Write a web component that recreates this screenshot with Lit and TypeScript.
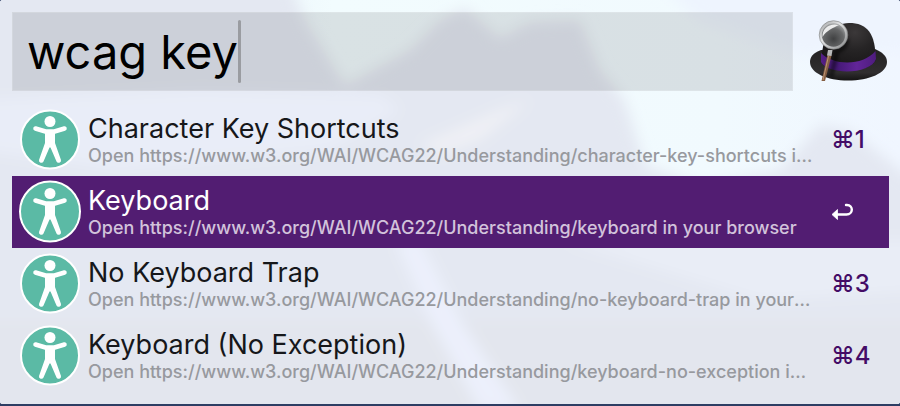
import { LitElement, html, css } from "lit";
import { customElement, property, state } from "lit/decorators.js";
import { classMap } from "lit/directives/class-map.js";

interface Result {
  title: string;
  subtitle: string;
}

const BASE = "https://www.w3.org/WAI/WCAG22/Understanding/";
const RESULTS: Result[] = [
  { title: "Character Key Shortcuts", subtitle: `Open ${BASE}character-key-shortcuts in your browser` },
  { title: "Keyboard", subtitle: `Open ${BASE}keyboard in your browser` },
  { title: "No Keyboard Trap", subtitle: `Open ${BASE}no-keyboard-trap in your browser` },
  { title: "Keyboard (No Exception)", subtitle: `Open ${BASE}keyboard-no-exception in your browser` },
];

@customElement("bowler-hat")
export class BowlerHat extends LitElement {
  static styles = css`
    :host { display: block; }
    svg { display: block; width: 100%; height: auto; overflow: visible; }
  `;

  render() {
    return html`<svg viewBox="0 0 80 64" aria-hidden="true">
      <defs>
        <radialGradient id="crown" cx="0.62" cy="0.2" r="0.8">
          <stop offset="0" stop-color="#3b3839" />
          <stop offset="0.45" stop-color="#262425" />
          <stop offset="1" stop-color="#171516" />
        </radialGradient>
        <linearGradient id="brim" x1="0" y1="0" x2="0" y2="1">
          <stop offset="0" stop-color="#242223" />
          <stop offset="0.75" stop-color="#302e2f" />
          <stop offset="1" stop-color="#151414" />
        </linearGradient>
        <linearGradient id="band" x1="0" y1="0" x2="1" y2="0">
          <stop offset="0" stop-color="#541f85" />
          <stop offset="0.3" stop-color="#451976" />
          <stop offset="0.65" stop-color="#622598" />
          <stop offset="1" stop-color="#4e1c7e" />
        </linearGradient>
        <radialGradient id="glass" cx="0.5" cy="0.65" r="0.6">
          <stop offset="0" stop-color="#404142" />
          <stop offset="0.65" stop-color="#68696a" />
          <stop offset="1" stop-color="#a7a9aa" />
        </radialGradient>
        <linearGradient id="rim" x1="0" y1="0" x2="1" y2="1">
          <stop offset="0" stop-color="#a5a6a7" />
          <stop offset="0.4" stop-color="#e2e3e4" />
          <stop offset="1" stop-color="#88898a" />
        </linearGradient>
        <filter id="soft" x="-50%" y="-50%" width="200%" height="200%"><feGaussianBlur stdDeviation="1.4" /></filter>
        <clipPath id="hat">
          <path d="M14 32C17 10 30 3 42 3C56 3 67 12 68 30C75 33 80 37 80 42C80 54 59 61 40 61C20 61 3 53 3 42C3 37 7 34 14 30Z" />
        </clipPath>
      </defs>
      <path d="M14 30C6 33 3 37 3 42C3 53 20 60.5 41 60.5C62 60.5 80 53 80 42C80 36 75 32 68 29Z" fill="url(#brim)" />
      <path d="M15 44C13 17 26 3 42 3C60 3 69 13 68.5 41C61 53 26 54 15 44Z" fill="url(#crown)" />
      <path d="M14 33C27 46 56 46 68.5 31L69 39C64 55 20 55 14 42Z" fill="url(#band)" />
      <g clip-path="url(#hat)">
        <path d="M30 31L24 57M40 19A14 14 0 0 1 26 32" fill="none" stroke="#000" stroke-width="5" opacity="0.45" filter="url(#soft)" />
      </g>
      <path d="M20.5 35L24.5 35.5L18 61L14.5 61Z" fill="#865f43" />
      <path d="M21.5 36L16 60" stroke="#bb9474" stroke-width="1" />
      <path d="M21 30L25.5 30L24.5 36L20 35.5Z" fill="#b9babb" />
      <circle cx="26.5" cy="15" r="13" fill="url(#glass)" stroke="url(#rim)" stroke-width="2.6" />
      <path d="M15.5 17C15 8 23 2.5 32 5C26 8 20 10 15.5 17Z" fill="#fff" opacity="0.85" />
      <circle cx="26.5" cy="15" r="14.3" fill="none" stroke="#7e7f80" stroke-width="0.6" />
    </svg>`;
  }
}

@customElement("result-row")
export class ResultRow extends LitElement {
  @property({ attribute: false }) result!: Result;
  @property({ type: Number }) position = 1;
  @property({ type: Boolean }) selected = false;

  static styles = css`
    :host { display: block; }
    .row {
      display: grid;
      grid-template-columns: 60px minmax(0, 1fr) 48px;
      align-items: center;
      box-sizing: border-box;
      width: 100%;
      height: 72px;
      padding: 0 10px 0 8px;
      border: 0;
      background: transparent;
      color: #16171a;
      font-family: Inter, "Liberation Sans", sans-serif;
      text-align: left;
      outline: none;
    }
    .selected { background: #521d72; color: #fff; }
    .icon { display: block; width: 60px; height: 60px; overflow: visible; }
    .text { display: flex; flex-direction: column; min-width: 0; margin: 0 16px 0 8px; }
    .title { font-size: 27px; line-height: 32px; white-space: nowrap; }
    .subtitle {
      font-size: 18px;
      font-weight: 500;
      line-height: 22px;
      color: #97999e;
      white-space: nowrap;
      overflow: hidden;
      text-overflow: ellipsis;
    }
    .selected .subtitle { color: #d2c3db; }
    .key { font-size: 24px; font-weight: 500; line-height: 32px; color: #440c66; white-space: nowrap; }
    .return { display: block; width: 24px; height: 20px; }
  `;

  render() {
    const { title, subtitle } = this.result;
    return html`<button class=${classMap({ row: true, selected: this.selected })} type="button">
      <svg class="icon" viewBox="0 0 60 60" aria-hidden="true">
        <circle cx="30" cy="29.5" r=${this.selected ? 30 : 29} fill="#5bbaa5" stroke="#fff" stroke-width="2" />
        <circle cx="30" cy="11.5" r="5.5" fill="#fff" />
        <path d="M15.5 18.5L25.5 21.5H34.5L44.5 18.5" fill="none" stroke="#fff" stroke-width="4.6" stroke-linecap="round" stroke-linejoin="round" />
        <path d="M25 20.5H35V33L41 50A2.4 2.4 0 0 1 36.5 51.5L30.5 37.5H29.5L23.5 51.5A2.4 2.4 0 0 1 19 50L25 33Z" fill="#fff" />
      </svg>
      <span class="text">
        <span class="title">${title}</span>
        <span class="subtitle">${subtitle}</span>
      </span>
      ${this.selected
        ? html`<svg class="return" viewBox="0 0 24 20" role="img" aria-label="Return">
            <path d="M6 12.5H15.5C22.5 12.5 22.5 3 16 3H15" fill="none" stroke="#fff" stroke-width="2.4" stroke-linecap="round" />
            <path d="M1 12.5L6.5 7.5V17.5Z" fill="#fff" stroke="#fff" stroke-width="0.8" stroke-linejoin="round" />
          </svg>`
        : html`<span class="key">⌘${this.position}</span>`}
    </button>`;
  }
}

@customElement("app-root")
export class AppRoot extends LitElement {
  @state() private query = "wcag key";
  @state() private selected = 1;

  static styles = css`
    :host { display: block; background: #2d3d63; padding-bottom: 2px; }
    .panel {
      position: relative;
      isolation: isolate;
      overflow: hidden;
      padding: 12px 11px 12px 12px;
      border-radius: 3px;
      background: #e6eaf4;
    }
    .scenery { position: absolute; inset: 0; z-index: -1; width: 100%; height: 100%; }
    .top { display: flex; align-items: center; gap: 14px; margin: 0 2px 13px 0; }
    .search {
      display: flex;
      align-items: center;
      flex: 1;
      min-width: 0;
      box-sizing: border-box;
      height: 79px;
      padding-left: 14px;
      background: rgba(0, 0, 0, 0.1);
      border: 1px solid rgba(255, 255, 255, 0.15);
    }
    .query {
      field-sizing: content;
      min-width: 0;
      padding: 0;
      border: 0;
      outline: none;
      background: transparent;
      color: #000;
      font: 400 47px/64px Inter, "Liberation Sans", sans-serif;
      caret-color: transparent;
    }
    .caret { flex: none; width: 3px; height: 63px; border-radius: 2px; background: #9a9ca1; }
    .hat { flex: none; width: 80px; }
    .results { margin: 0; padding: 0; list-style: none; }
  `;

  private onInput(e: Event) {
    this.query = (e.target as HTMLInputElement).value;
  }

  private scenery() {
    return html`<svg class="scenery" viewBox="0 0 900 404" preserveAspectRatio="none" aria-hidden="true">
      <defs>
        <filter id="haze" x="-20%" y="-20%" width="140%" height="140%"><feGaussianBlur stdDeviation="7" /></filter>
        <linearGradient id="sky" x1="0" y1="0" x2="1" y2="0">
          <stop offset="0" stop-color="#e6eaf4" />
          <stop offset="0.3" stop-color="#eef8fc" />
          <stop offset="0.37" stop-color="#f2fcfe" />
          <stop offset="0.8" stop-color="#f1fafe" />
          <stop offset="1" stop-color="#f0f6ff" />
        </linearGradient>
      </defs>
      <rect width="900" height="404" fill="url(#sky)" />
      <g filter="url(#haze)">
        <path d="M640-30H940V50L800 55L700 20Z" fill="#eef4fe" />
        <path d="M-40-40H280L305 20L345 85L410 50L440 20L465 8L500 38L530 22L580 20L600 70L625 100L645 165L700 185L780 170L820 125L850 130L900 170L940 200V450H-40Z" fill="#e4e8f2" />
        <path d="M-20 100L200 90L380 95L400 110L330 150L120 170L-20 150Z" fill="#e9edf8" />
        <path d="M420 145L500 110L530 100L480 140L440 155Z" fill="#eff0f5" />
        <path d="M560 240H940V290L760 300Z" fill="#e9edf6" />
        <path d="M-20 320H920V430H-20Z" fill="#e3e6ee" />
        <path d="M395 240H420L460 320L520 410H480L430 320Z" fill="#ecf0fc" />
      </g>
    </svg>`;
  }

  render() {
    return html`<main class="panel">
      ${this.scenery()}
      <div class="top">
        <div class="search">
          <input class="query" type="text" aria-label="Search" spellcheck="false" .value=${this.query} @input=${this.onInput} />
          <span class="caret"></span>
        </div>
        <bowler-hat class="hat"></bowler-hat>
      </div>
      <ul class="results">
        ${RESULTS.map(
          (result, i) => html`<li>
            <result-row
              .result=${result}
              .position=${i + 1}
              .selected=${i === this.selected}
              @click=${() => (this.selected = i)}
            ></result-row>
          </li>`,
        )}
      </ul>
    </main>`;
  }
}
